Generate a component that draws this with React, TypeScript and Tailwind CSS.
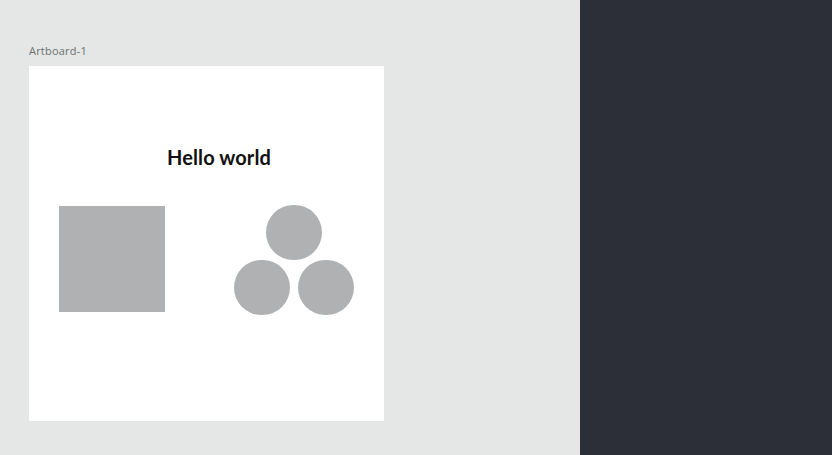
import React from "react";

const circle = "rounded-full bg-[#b0b1b3] w-[56px] h-[55px]";

export default function App() {
  return (
    <div className="flex h-[455px] w-[832px] overflow-hidden font-['Lato',sans-serif]">
      <div className="flex-1 flex flex-col bg-[#e4e7e5] pl-[29px] pt-[44px]">
        <div className="text-[11px] leading-[14px] text-[#6e7173] font-['Open_Sans',sans-serif] tracking-[0.2px] mb-[8px]">
          Artboard-1
        </div>
        <div className="flex flex-col w-[355px] h-[355px] bg-white pt-[78px]">
          <div className="pl-[25px] text-center text-[20px] leading-[26px] font-bold text-[#111] tracking-[0.1px]">
            Hello world
          </div>
          <div className="flex items-start mt-[35px] pl-[30px] gap-[69px]">
            <div className="mt-[1px] w-[106px] h-[106px] bg-[#b0b1b3]" />
            <div className="flex flex-col items-center">
              <div className={circle} />
              <div className="flex gap-[8px]">
                <div className={circle} />
                <div className={circle} />
              </div>
            </div>
          </div>
        </div>
      </div>
      <div className="w-[252px] bg-[#2c2f37]" />
    </div>
  );
}
